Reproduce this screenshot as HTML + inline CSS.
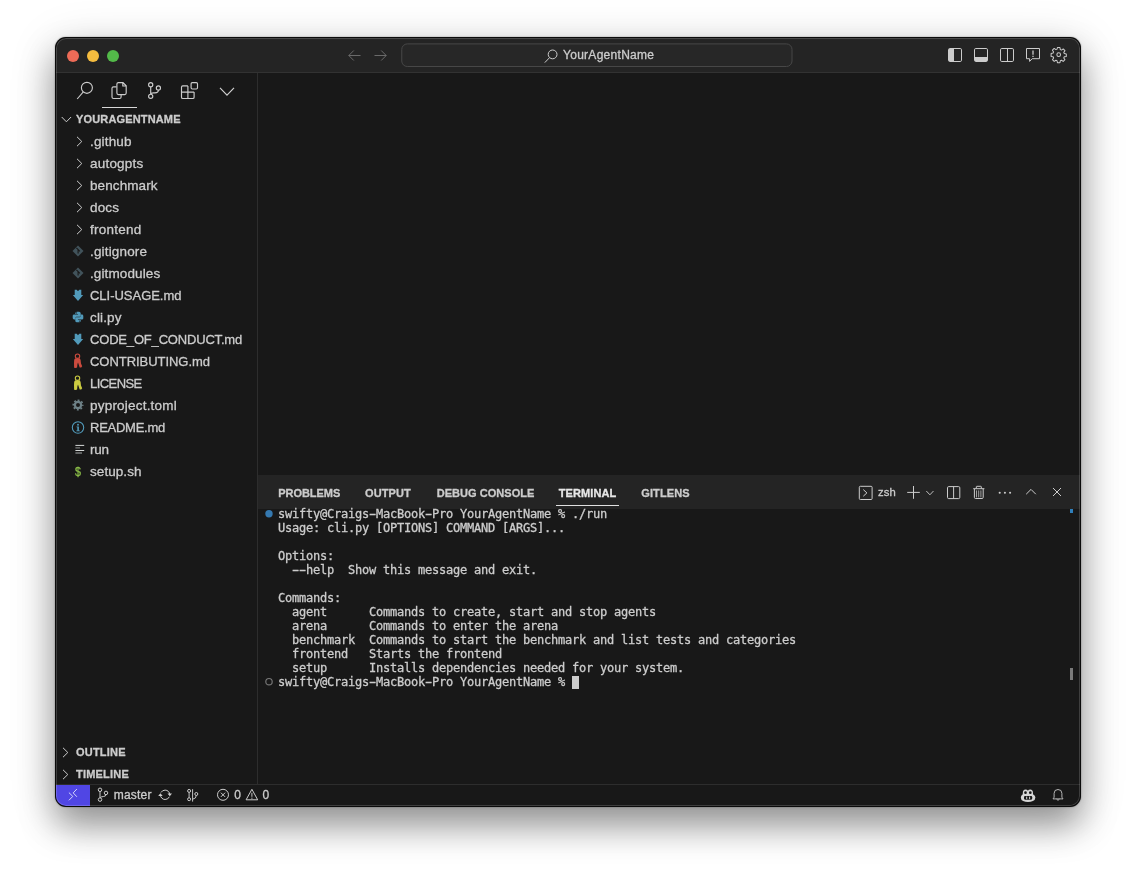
<!DOCTYPE html>
<html lang="en">
<head>
<meta charset="utf-8">
<title>YourAgentName</title>
<style>
*{box-sizing:border-box;margin:0;padding:0}
html,body{width:1136px;height:880px;overflow:hidden;background:#fff}
body{position:relative;font-family:"Liberation Sans",sans-serif;font-size:13px;color:#ccc;-webkit-text-stroke:.3px}
.abs{position:absolute}
#shadow{left:55px;top:37px;width:1026px;height:770px;border-radius:11px;background:#0b0b0b;
 box-shadow:0 0 1.5px rgba(0,0,0,.5),0 19px 34px rgba(0,0,0,.36),0 8px 48px rgba(0,0,0,.15)}
#win{left:56px;top:38px;width:1024px;height:768px;border-radius:10px;background:#181818;overflow:hidden;will-change:transform}
#win:after{content:"";position:absolute;left:0;top:0;right:0;bottom:0;border-radius:10px;box-shadow:inset 0 0 0 1px rgba(255,255,255,.17);pointer-events:none}
svg{position:absolute;overflow:visible;fill:none;stroke:#ccc;stroke-width:1;stroke-linecap:butt;stroke-linejoin:miter}
/* title bar */
#title{left:0;top:0;width:1024px;height:35px;background:#242424;border-bottom:1px solid #323232}
.tl{top:12px;width:12px;height:12px;border-radius:50%}
#cmd{left:345px;top:6px;width:392px;height:23px;border:1px solid transparent}
#cmdtxt{left:161px;top:0;line-height:21px;font-size:12px;color:#ccc;white-space:nowrap;letter-spacing:.28px}
/* sidebar */
#side{left:0;top:35px;width:202px;height:711px;border-right:1px solid #2d2d2d;background:#181818}
.row{left:0;width:201px;height:22px;line-height:22px;white-space:nowrap}
.row span.l{position:absolute;left:34px;top:1px}
.row svg.ch{left:20px;top:6px;width:7px;height:11px}
.hdr{font-size:11px;font-weight:bold;color:#ccc}
.hdr span.l{left:20px;top:0}
.lc span.l{font-size:13.5px}
/* panel */
#panel{left:202px;top:437px;width:822px;height:309px;background:#181818}
#pstrip{left:0;top:0;width:822px;height:34px;background:#242424}
.tab{top:1px;height:35px;line-height:35px;font-size:11px;color:#ccc;font-weight:bold;white-space:nowrap}
#term{left:20px;top:32px;font-family:"DejaVu Sans Mono","Liberation Mono",monospace;font-size:12px;letter-spacing:-.2246px;line-height:14px;color:#ccc;white-space:pre}
.h{display:inline-block;transform:scaleX(1.750)}
/* status */
#status{left:0;top:746px;width:1024px;height:22px;border-top:1px solid #2d2d2d;background:#181818;font-size:12px;line-height:21px;color:#ccc}
#status .t{top:1px;white-space:nowrap}
</style>
</head>
<body>
<div id="shadow" class="abs"></div>
<div id="win" class="abs">

<div id="title" class="abs">
 <div class="tl abs" style="left:11px;background:#ed6b57"></div>
 <div class="tl abs" style="left:31px;background:#f5bc3f"></div>
 <div class="tl abs" style="left:51px;background:#53ba49"></div>
 <!-- nav arrows -->
 <svg style="left:292px;top:11px;width:13px;height:13px;stroke:#6a6a6a" viewBox="0 0 13 13"><path d="M12.5 6.5H.8M5.8 1.5l-5 5 5 5"/></svg>
 <svg style="left:318px;top:11px;width:13px;height:13px;stroke:#6a6a6a" viewBox="0 0 13 13"><path d="M.5 6.5h11.7M7.2 1.5l5 5-5 5"/></svg>
 <svg style="left:0;top:0;width:1024px;height:35px" viewBox="0 0 1024 35"><rect x="345.750" y="5.900" width="390.250" height="22.600" rx="5.500" fill="#272727" stroke="#474747"/></svg>
 <div id="cmd" class="abs">
  <svg style="left:142px;top:4px;width:14px;height:14px" viewBox="0 0 14 14"><circle cx="8.6" cy="5.4" r="4.4"/><path d="M5.6 8.6L.8 13.6"/></svg>
  <div id="cmdtxt" class="abs">YourAgentName</div>
 </div>
 <!-- layout icons -->
 <svg style="left:892px;top:10px;width:14px;height:14px" viewBox="0 0 14 14"><rect x=".5" y=".5" width="13" height="13" rx="1.3"/><rect x="1" y="1" width="5" height="12" fill="#ccc" stroke="none"/></svg>
 <svg style="left:918px;top:10px;width:14px;height:14px" viewBox="0 0 14 14"><rect x=".5" y=".5" width="13" height="13" rx="1.3"/><rect x="1" y="9" width="12" height="4" fill="#ccc" stroke="none"/></svg>
 <svg style="left:944px;top:10px;width:14px;height:14px" viewBox="0 0 14 14"><rect x=".5" y=".5" width="13" height="13" rx="1.3"/><path d="M7.500 .5v13"/></svg>
 <svg style="left:970px;top:10px;width:14px;height:15px" viewBox="0 0 14 15"><path d="M.5 .5h13v10.2H6.2L3.6 13.4V10.7H.5z"/><path d="M7 2.6v4.2M7 7.8v1.3" stroke-width="1.3"/></svg>
 <svg style="left:995.300px;top:9.300px;width:15.400px;height:15.400px;stroke-width:1.050" viewBox="0 0 16 16"><circle cx="8" cy="8" r="1.9"/><path d="M6.7.6h2.6l.4 2.1 1.2.5 1.8-1.2 1.8 1.8-1.2 1.8.5 1.2 2.1.4v2.6l-2.1.4-.5 1.2 1.2 1.8-1.8 1.8-1.8-1.2-1.2.5-.4 2.1H6.700l-.4-2.1-1.2-.5-1.8 1.200-1.8-1.800 1.200-1.800-.5-1.200-2.100-.4V6.700l2.100-.4.5-1.200-1.200-1.800 1.800-1.800 1.800 1.200 1.200-.5z" stroke-linejoin="round"/></svg>
</div>
<div id="side" class="abs">
 <!-- activity bar -->
 <svg style="left:0;top:0;width:201px;height:35px;stroke-width:1.150" viewBox="0 0 201 35">
  <circle cx="30.900" cy="14.800" r="5.500"/><path d="M27.300 18.900L21.200 26"/>
  <path d="M60.500 13.800H57.500Q56 13.800 56 15.300V24Q56 25.500 57.500 25.500H63.600Q65.100 25.500 65.100 24V21.600"/>
  <path d="M62.400 9.600H67l3.200 3.200V20.100Q70.200 21.600 68.700 21.600H62.400Q60.900 21.600 60.900 20.100V11.100Q60.900 9.600 62.400 9.600zM66.800 9.800V13H70" />
  <circle cx="94.700" cy="11.700" r="2.100"/><circle cx="102.400" cy="14.900" r="2.100"/><circle cx="94.700" cy="23.300" r="2.100"/><path d="M94.700 13.800V21.200M102.400 17Q102.400 19.800 99 19.800H97.500Q94.700 19.800 94.700 21.200"/>
  <path d="M131.900 12.900H126.800Q125.500 12.900 125.500 14.200V24.200Q125.500 25.500 126.800 25.500H136.800Q138.100 25.500 138.100 24.200V19.100M131.900 12.900V25.500M125.500 19.100H138.100"/>
  <rect x="135.100" y="9.600" width="6.400" height="6.400" rx="1.200"/>
  <path d="M164 14.900L171 22.100 178 14.900" stroke-width="1.200"/>
 </svg>
 <div class="abs" style="left:46px;top:34px;width:35px;height:1px;background:#d7d7d7"></div>
 <div class="row hdr abs" style="top:35px"><svg style="left:5px;top:8px;width:11px;height:7px" viewBox="0 0 11 7"><path d="M.7 1l4.700 4.800L10.100 1"/></svg><span class="l" style="letter-spacing:.15px">YOURAGENTNAME</span></div>
 <div class="row abs" style="top:57px"><svg class="ch" viewBox="0 0 7 11"><path d="M1 .8l4.8 4.7L1 10.200"/></svg><span class="l" style="font-size:13.5px;letter-spacing:0.159px">.github</span></div>
 <div class="row abs" style="top:79px"><svg class="ch" viewBox="0 0 7 11"><path d="M1 .8l4.8 4.7L1 10.200"/></svg><span class="l" style="font-size:13.5px;letter-spacing:0.208px">autogpts</span></div>
 <div class="row abs" style="top:101px"><svg class="ch" viewBox="0 0 7 11"><path d="M1 .8l4.8 4.7L1 10.200"/></svg><span class="l" style="font-size:13.5px;letter-spacing:0.088px">benchmark</span></div>
 <div class="row abs" style="top:123px"><svg class="ch" viewBox="0 0 7 11"><path d="M1 .8l4.8 4.7L1 10.200"/></svg><span class="l" style="font-size:13.5px;letter-spacing:0.156px">docs</span></div>
 <div class="row abs" style="top:145px"><svg class="ch" viewBox="0 0 7 11"><path d="M1 .8l4.8 4.7L1 10.200"/></svg><span class="l" style="font-size:13.5px;letter-spacing:0.243px">frontend</span></div>
 <div class="row abs" style="top:167px"><svg style="left:15.500px;top:5.300px;width:12px;height:12px;stroke:none" viewBox="-6 -6 12 12"><path d="M0-5.500L5.500 0 0 5.500-5.500 0z" fill="#41535b"/><path d="M-1.600-3.200L1.900 .3M.1-1.400V2.600" stroke="#181818" stroke-width="1.100"/></svg><span class="l" style="font-size:13.5px;letter-spacing:0.161px">.gitignore</span></div>
 <div class="row abs" style="top:189px"><svg style="left:15.500px;top:5.300px;width:12px;height:12px;stroke:none" viewBox="-6 -6 12 12"><path d="M0-5.500L5.500 0 0 5.500-5.500 0z" fill="#41535b"/><path d="M-1.600-3.200L1.900 .3M.1-1.400V2.600" stroke="#181818" stroke-width="1.100"/></svg><span class="l" style="font-size:13.5px;letter-spacing:0.120px">.gitmodules</span></div>
 <div class="row abs" style="top:211px"><svg style="left:15.700px;top:5px;width:12px;height:12px;stroke:none" viewBox="-6 0 12 12"><path d="M-3.300 .7h2L0 2.200 1.300 .7h2v5.400h1.900L0 12-5.200 6.100h1.900z" fill="#519aba"/></svg><span class="l" style="font-size:13px;letter-spacing:-0.023px">CLI-USAGE.md</span></div>
 <div class="row abs" style="top:233px"><svg style="left:16px;top:5px;width:12px;height:12px;stroke:none" viewBox="-6 -6 12 12"><g fill="#519aba"><path id="pyh" d="M-2.700-3.700Q-2.700-5.300-1.100-5.300H1.100Q2.700-5.300 2.700-3.700V-1.300Q2.700-.3 1.700-.3H-1.500Q-2.500-.3-2.500 .8V2.500H-3.900Q-5.300 2.500-5.300 1.100V-1.200Q-5.300-2.600-3.900-2.600H.1V-3.100H-2.700z"/><path d="M-2.700-3.700Q-2.700-5.300-1.100-5.300H1.100Q2.700-5.300 2.700-3.700V-1.300Q2.700-.3 1.700-.3H-1.500Q-2.500-.3-2.500 .8V2.500H-3.900Q-5.300 2.500-5.300 1.100V-1.200Q-5.300-2.600-3.900-2.600H.1V-3.100H-2.700z" transform="rotate(180)"/></g><circle cx="-1.400" cy="-4.100" r=".55" fill="#181818"/><circle cx="1.400" cy="4.100" r=".55" fill="#181818"/></svg><span class="l" style="font-size:13.5px;letter-spacing:0.147px">cli.py</span></div>
 <div class="row abs" style="top:255px"><svg style="left:15.700px;top:5px;width:12px;height:12px;stroke:none" viewBox="-6 0 12 12"><path d="M-3.300 .7h2L0 2.200 1.300 .7h2v5.400h1.900L0 12-5.200 6.100h1.900z" fill="#519aba"/></svg><span class="l" style="font-size:13px;letter-spacing:-0.179px">CODE_OF_CONDUCT.md</span></div>
 <div class="row abs" style="top:277px"><svg style="left:12px;top:0;width:18px;height:22px;stroke:none" viewBox="0 0 18 22"><circle cx="9.500" cy="6.200" r="2.200" fill="none" stroke="#cb4b3e" stroke-width="1.100"/><path d="M7.200 8.200Q9.500 8.800 11.800 8.200L12.600 10 13 13.500 14.200 16.300 13.200 17.500 11.700 17.400 10.600 14.200 10 12.400 9.400 14.200 9.100 17.600 7.600 18.100 6.100 17.800 6 13 6.200 9.800z" fill="#cb4b3e"/></svg><span class="l" style="font-size:13px;letter-spacing:-0.045px">CONTRIBUTING.md</span></div>
 <div class="row abs" style="top:299px"><svg style="left:12px;top:0;width:18px;height:22px;stroke:none" viewBox="0 0 18 22"><circle cx="9.500" cy="6.200" r="2.200" fill="none" stroke="#cbcb41" stroke-width="1.100"/><path d="M7.200 8.200Q9.500 8.800 11.800 8.200L12.600 10 13 13.500 14.200 16.300 13.200 17.500 11.700 17.400 10.600 14.200 10 12.400 9.400 14.200 9.100 17.600 7.600 18.100 6.100 17.800 6 13 6.200 9.800z" fill="#cbcb41"/></svg><span class="l" style="font-size:13px;letter-spacing:-0.565px">LICENSE</span></div>
 <div class="row abs" style="top:321px"><svg style="left:15.650px;top:5.400px;width:12px;height:12px" viewBox="-6 -6 12 12"><circle r="3.100" stroke="#6d8086" stroke-width="2.200"/><circle r="4.700" stroke="#6d8086" stroke-width="1.700" stroke-dasharray="1.850 1.841" stroke-dashoffset=".92"/></svg><span class="l" style="font-size:13.5px;letter-spacing:0.208px">pyproject.toml</span></div>
 <div class="row abs" style="top:343px"><svg style="left:15px;top:5px;width:14px;height:13px" viewBox="-7 -6.500 14 13"><circle r="5.700" stroke="#519aba" stroke-width="1.100"/><circle cy="-2.800" r=".95" fill="#519aba" stroke="none"/><path d="M-1.500-1.100H.9V2.900H1.900V3.700H-1.700V2.900H-.700V-.3H-1.500z" fill="#519aba" stroke="none"/></svg><span class="l" style="font-size:13px;letter-spacing:-0.256px">README.md</span></div>
 <div class="row abs" style="top:365px"><svg style="left:19px;top:6px;width:10px;height:10px;stroke:none" viewBox="0 0 10 10"><rect x=".4" y=".9" width="8.800" height="1" fill="#d4d7d6"/><rect x=".4" y="3.400" width="4.600" height="1" fill="#8f9292"/><rect x=".4" y="6" width="8.800" height="1" fill="#d4d7d6"/><rect x=".4" y="8.500" width="6.600" height="1" fill="#a8abab"/></svg><span class="l" style="font-size:13.5px;letter-spacing:-0.258px">run</span></div>
 <div class="row abs" style="top:387px"><span class="abs" style="left:16.900px;top:.6px;width:10px;text-align:center;font-size:13px;color:#8dc149;-webkit-text-stroke:.3px #8dc149;transform:scaleX(.82)">$</span><span class="l" style="font-size:13.5px;letter-spacing:0.065px">setup.sh</span></div>
 <div class="row hdr abs" style="top:668px"><svg class="ch" style="left:6px" viewBox="0 0 7 11"><path d="M1 .8l4.800 4.700L1 10.200"/></svg><span class="l" style="letter-spacing:.2px">OUTLINE</span></div>
 <div class="row hdr abs" style="top:690px"><svg class="ch" style="left:6px" viewBox="0 0 7 11"><path d="M1 .8l4.800 4.700L1 10.200"/></svg><span class="l" style="letter-spacing:.2px">TIMELINE</span></div>
</div>
<div id="panel" class="abs">
 <div id="pstrip" class="abs"></div>
 <div class="tab abs" style="left:20.25px;letter-spacing:-.05px">PROBLEMS</div>
 <div class="tab abs" style="left:107px;letter-spacing:.1px">OUTPUT</div>
 <div class="tab abs" style="left:178.750px;letter-spacing:.04px">DEBUG CONSOLE</div>
 <div class="tab abs" style="left:300.750px;color:#e7e7e7;letter-spacing:.1px">TERMINAL</div>
 <div class="tab abs" style="left:383.250px;letter-spacing:.1px">GITLENS</div>
 <div class="abs" style="left:298px;top:30px;width:63px;height:1px;background:#e0e0e0"></div>
 <!-- panel actions -->
 <svg style="left:600px;top:10px;width:210px;height:16px" viewBox="600 10 210 16">
  <rect x="601.300" y="11.300" width="12.800" height="13.200" rx="1"/><path d="M605.300 14.600L608.900 17.900 605.300 21.200"/>
  <path d="M649.200 17.400H661.800M655.500 11V23.800"/>
  <path d="M668.300 16l3.600 3.800 3.600-3.800" stroke-width=".9"/>
  <rect x="689.500" y="11.600" width="12.300" height="12" rx="1.200"/><path d="M695.600 11.600V23.600"/>
  <path d="M715.200 13.700H726.400M718.300 13.500V11.800Q718.300 11.300 718.800 11.300H722.800Q723.300 11.300 723.300 11.800V13.500M716.400 13.900V22.400Q716.400 23.500 717.500 23.500H724.100Q725.200 23.500 725.200 22.400V13.900"/><path d="M718.500 15.400V22.400M720.700 15.400V22.400M722.900 15.400V22.400" stroke-width=".75"/>
  <g fill="#ccc" stroke="none"><circle cx="741.700" cy="17.700" r="1.050"/><circle cx="746.900" cy="17.700" r="1.050"/><circle cx="752.100" cy="17.700" r="1.050"/></g>
  <path d="M768.200 19.200L773 14.400 777.800 19.200"/>
  <path d="M795 13L803 21M803 13L795 21"/>
 </svg>
 <div class="abs" style="left:620px;top:0;line-height:34px;font-size:11.300px;letter-spacing:.1px;color:#ccc">zsh</div>
 <div class="abs" style="left:812px;top:34px;width:3px;height:4px;background:#2f7fbb"></div>
 <div class="abs" style="left:812px;top:193px;width:3px;height:12px;background:#7a7a7a"></div>
 <svg style="left:6px;top:34px;width:10px;height:180px;stroke:none" viewBox="6 34 10 180"><circle cx="11" cy="38.700" r="3.700" fill="#3579b0"/><circle cx="11" cy="206.700" r="3.200" fill="none" stroke="#767676" stroke-width="1.200"/></svg>
<div id="term" class="abs">swifty@Craigs<span class="h">-</span>MacBook<span class="h">-</span>Pro YourAgentName % ./run
Usage: cli.py [OPTIONS] COMMAND [ARGS]...

Options:
  <span class="h">-</span><span class="h">-</span>help  Show this message and exit.

Commands:
  agent      Commands to create, start and stop agents
  arena      Commands to enter the arena
  benchmark  Commands to start the benchmark and list tests and categories
  frontend   Starts the frontend
  setup      Installs dependencies needed for your system.
swifty@Craigs<span class="h">-</span>MacBook<span class="h">-</span>Pro YourAgentName % </div>
 <div class="abs" style="left:314px;top:201px;width:7px;height:13px;background:#ccc"></div>
</div>

<div id="status" class="abs">
 <div class="abs" style="left:0;top:0;width:34px;height:21px;background:#5046e4"></div>
 <svg style="left:0;top:0;width:300px;height:21px" viewBox="0 1 300 21">
  <path d="M12.900 8.600L16.800 12.400 12.900 16.300M20.900 5L17.200 8.900 20.900 12.800" stroke="#dcdcfa" stroke-width=".95"/>
  <circle cx="44" cy="5.800" r="1.750"/><circle cx="50" cy="8.900" r="1.750"/><circle cx="44" cy="15.600" r="1.750"/><path d="M44 7.550V13.850M50 10.650Q50 12.300 47.500 12.500 44.600 12.700 44.200 13.850"/>
  <circle cx="109.100" cy="10.800" r="4.700" stroke-dasharray="12.700 2.065" stroke-dashoffset="12.700"/>
  <path d="M111.500 9.600H116L113.800 12.300zM106.700 12H102.200L104.400 9.300z" fill="#ccc" stroke="none"/>
  <circle cx="133.100" cy="6.900" r="1.500"/><circle cx="133.100" cy="15.200" r="1.500"/><circle cx="140.300" cy="10" r="1.500"/><path d="M133.100 8.400V13.700M136.600 5.200V17.600M140.300 11.500Q140.300 14.600 136.600 15.200" stroke-width=".95"/>
  <circle cx="167" cy="10.800" r="5.500"/><path d="M164.900 8.700l4.200 4.200M169.100 8.700l-4.200 4.200"/>
  <path d="M195.900 5.300L201.700 15.800H190.100z" stroke-linejoin="round"/><path d="M195.900 8.800V12.800M195.900 13.600V14.800" stroke-width=".95"/>
 </svg>
 <div class="abs t" style="left:57.800px;top:0;letter-spacing:.2px">master</div>
 <div class="abs t" style="left:178.200px;top:0">0</div>
 <div class="abs t" style="left:206.400px;top:0">0</div>
 <!-- right side -->
 <svg style="left:960px;top:0;width:60px;height:21px" viewBox="960 1 60 21">
  <g stroke="none"><path d="M966.800 9.200Q966.800 5.600 969.500 5.600 971.300 5.600 971.900 6.700 972.500 5.600 974.300 5.600 977 5.600 977 9.200V10.300Q979.400 11.500 979.400 13.500 979.400 15.800 976.900 17 974.800 18 972 18 969.200 18 967.100 17 964.800 15.800 964.800 13.500 964.800 11.500 966.800 10.300z" fill="#d6d6d6"/>
  <circle cx="969.500" cy="8.700" r="1.350" fill="#181818"/><circle cx="974.300" cy="8.700" r="1.350" fill="#181818"/>
  <rect x="968" y="12.100" width="8.200" height="3.600" rx="1.100" fill="#181818"/>
  <rect x="970.200" y="12.600" width="1" height="2.600" fill="#d6d6d6"/><rect x="973.100" y="12.600" width="1" height="2.600" fill="#d6d6d6"/></g>
  <path d="M997 14.900L998.100 13.200V9.400A3.900 3.900 0 0 1 1005.900 9.400V13.200L1007 14.900zM1000.500 15.100Q1002 17.500 1003.500 15.100" stroke="#bdbdbd" stroke-width=".95" stroke-linejoin="round"/>
 </svg>
</div>

</div>
</body>
</html>
